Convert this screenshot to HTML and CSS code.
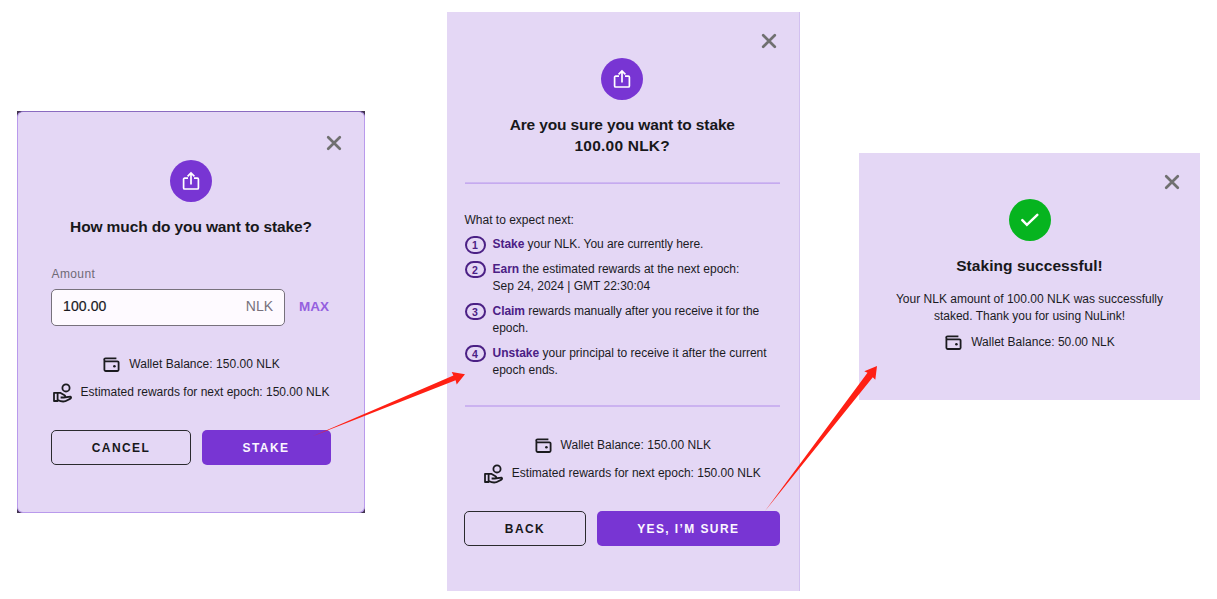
FILE: index.html
```html
<!DOCTYPE html>
<html lang="en">
<head>
<meta charset="utf-8">
<title>Staking flow</title>
<link rel="stylesheet" href="styles.css">
</head>
<body>
<svg class="symbols" aria-hidden="true">
  <symbol id="close" viewBox="0 0 16 16"><path d="M2.200 2.200l11.600 11.600M13.800 2.200L2.200 13.800" fill="none" stroke="#707070" stroke-width="2.700" stroke-linecap="round"/></symbol>
  <symbol id="share" viewBox="0 0 18 20"><path d="M6 7.200H2.600a1 1 0 0 0-1 1v8.800a1 1 0 0 0 1 1h12.800a1 1 0 0 0 1-1V8.200a1 1 0 0 0-1-1H12M9 13.600V2.300M5.600 5.400L9 2l3.400 3.400" fill="none" stroke="#fff" stroke-width="1.700"/></symbol>
  <symbol id="wallet" viewBox="0 0 17 16"><path d="M1.400 3V12.800a1.200 1.200 0 0 0 1.200 1.200h11.800a1.200 1.200 0 0 0 1.200-1.200V5.500a1.200 1.200 0 0 0-1.200-1.200H2.600a1.400 1.400 0 0 1 0-2.900H13.400" fill="none" stroke="#1b1b1f" stroke-width="1.800"/><circle cx="11.400" cy="9.200" r="1.300" fill="#1b1b1f"/></symbol>
  <symbol id="hand" viewBox="0 0 20 20"><g fill="none" stroke="#1b1b1f" stroke-width="1.800" stroke-linejoin="round"><circle cx="14" cy="4.900" r="3.600"/><path d="M2 9.800h3.600v8.200H2zM5.600 9.800h2.600l4.300 2.500c1.200.8.700 2.200-.6 2.200H8.600M11.800 14.500l6.800-.8c.9.800.4 1.600-.6 2.200l-4.700 2.300c-2.400.7-4.700.3-7.700-1.200"/></g></symbol>
</svg>
<main class="board">
  <section class="panel-shell first">
    <div class="panel">
      <svg class="close"><use href="#close"/></svg>
      <div class="badge"><svg class="share"><use href="#share"/></svg></div>
      <h2 class="title t-ask">How much do you want to stake?</h2>
      <div class="label">Amount</div>
      <div class="field-row">
        <div class="field"><span class="value">100.00</span><span class="unit">NLK</span></div>
        <span class="max">MAX</span>
      </div>
      <div class="info">
        <div class="info-row wallet-row"><svg class="wallet"><use href="#wallet"/></svg><span>Wallet Balance: 150.00 NLK</span></div>
        <div class="info-row"><svg class="hand"><use href="#hand"/></svg><span class="est">Estimated rewards for next epoch: 150.00 NLK</span></div>
      </div>
      <div class="actions"><button class="btn outline cancel">CANCEL</button><button class="btn solid">STAKE</button></div>
    </div>
  </section>

  <section class="panel second">
    <svg class="close"><use href="#close"/></svg>
    <div class="badge"><svg class="share"><use href="#share"/></svg></div>
    <h2 class="title t-sure">Are you sure you want to stake<br><span class="sum">100.00 NLK?</span></h2>
    <hr class="rule">
    <div class="steps">
      <p class="lead">What to expect next:</p>
      <div class="step"><span class="num">1</span><p class="s1"><b>Stake</b> your NLK. You are currently here.</p></div>
      <div class="step"><span class="num">2</span><p><b>Earn</b> the estimated rewards at the next epoch:<br>Sep 24, 2024 | GMT 22:30:04</p></div>
      <div class="step"><span class="num">3</span><p class="s3"><b>Claim</b> rewards manually after you receive it for the<br>epoch.</p></div>
      <div class="step"><span class="num">4</span><p><b>Unstake</b> your principal to receive it after the current<br>epoch ends.</p></div>
    </div>
    <hr class="rule">
    <div class="info">
      <div class="info-row wallet-row"><svg class="wallet"><use href="#wallet"/></svg><span>Wallet Balance: 150.00 NLK</span></div>
      <div class="info-row"><svg class="hand"><use href="#hand"/></svg><span class="est">Estimated rewards for next epoch: 150.00 NLK</span></div>
    </div>
    <div class="actions"><button class="btn outline back">BACK</button><button class="btn solid">YES, I’M SURE</button></div>
  </section>

  <section class="panel third">
    <svg class="close"><use href="#close"/></svg>
    <div class="badge success"><svg class="check" viewBox="0 0 20 16"><path d="M2.300 8.200l4.600 4.600L17.300 2.900" fill="none" stroke="#fff" stroke-width="2.500" stroke-linecap="round"/></svg></div>
    <h2 class="title t-done">Staking successful!</h2>
    <p class="message">Your NLK amount of 100.00 NLK was successfully<br>staked. Thank you for using NuLink!</p>
    <div class="info-row wallet-row"><svg class="wallet"><use href="#wallet"/></svg><span>Wallet Balance: 50.00 NLK</span></div>
  </section>

  <svg class="arrows" viewBox="0 0 1217 599" fill="#ff2014">
    <path d="M312 436.500L453.400 375.600L451.700 372L465 374.200L456.700 384.500L455.600 380.200Z"/>
    <path d="M765 511L867.500 372.800L864.300 371.300L877 366L875.300 379.700L872.800 377.200Z"/>
  </svg>
</main>
</body>
</html>
```
FILE: styles.css
```css
* { box-sizing: border-box; }
body { margin: 0; background: #fff; color: #1b1b1f; font: 12px/17.5px "Liberation Sans", Arial, sans-serif; }
h2, p { margin: 0; }
svg { display: block; flex: none; }
.symbols { position: absolute; width: 0; height: 0; }
.board { position: relative; width: 1217px; height: 599px; display: flex; align-items: flex-start; overflow: hidden; }
.arrows { position: absolute; inset: 0; width: 1217px; height: 599px; pointer-events: none; }

.panel { background: #e4d7f5; display: flex; flex-direction: column; align-items: center; position: relative; flex: none; }
.panel-shell { flex: none; background: #42334f; }
.first { margin: 111px 0 0 17px; width: 348px; height: 402px; }
.first .panel { height: 402px; padding: 48px 33.5px 0; border: 1px solid #b99aec; border-top-color: #8a6bc0; border-radius: 6px; }
.second { margin: 12px 0 0 82px; width: 353px; height: 579px; padding: 46px 19px 0 17.5px; border-right: 1px solid #d2c0f0; }
.third { margin: 153px 0 0 59px; width: 341px; height: 247px; padding-top: 46px; }

.close { position: absolute; width: 16px; height: 16px; top: 21px; right: 22px; }
.first .close { top: 23px; }
.third .close { right: 20px; }
.badge { width: 42px; height: 42px; border-radius: 50%; background: #7835d3; display: flex; align-items: center; justify-content: center; flex: none; }
.badge.success { background: #06b41f; }
.share { width: 18px; height: 20px; }
.check { width: 20px; height: 16px; }

.title { margin-top: 14px; font-size: 15.5px; line-height: 21px; text-align: center; white-space: nowrap; color: #18181b; }
.t-ask { letter-spacing: -.12px; }
.t-sure { letter-spacing: -.13px; }
.t-done { letter-spacing: .05px; }
.sum { letter-spacing: .22px; }

.label { align-self: stretch; margin-top: 29px; color: #6f6a75; letter-spacing: .4px; }
.field-row { align-self: stretch; display: flex; align-items: center; margin-top: 5px; margin-left: -.5px; }
.field { width: 234px; height: 37px; border: 1px solid #77717c; border-radius: 5px; background: #fefaff; padding: 0 11px; display: flex; align-items: center; justify-content: space-between; font-size: 14px; }
.value { -webkit-text-stroke: .2px currentColor; letter-spacing: .1px; }
.unit { color: #77717c; }
.max { margin-left: 14px; font-size: 13.5px; font-weight: 700; color: #9560df; }

.info { display: flex; flex-direction: column; align-items: center; gap: 8px; }
.first .info { margin-top: 29px; }
.second .info { margin-top: 29px; }
.info-row { display: flex; align-items: center; justify-content: center; height: 20px; white-space: nowrap; }
.wallet-row { padding-left: 1px; letter-spacing: .03px; }
.wallet { width: 17px; height: 16px; margin-right: 9px; }
.hand { width: 20px; height: 20px; margin-right: 9px; margin-left: -1px; }

.actions { align-self: stretch; display: flex; gap: 10.5px; margin: 27px 0 0 -.5px; }
.btn { height: 35px; border-radius: 5px; font: 700 12px "Liberation Sans", Arial, sans-serif; letter-spacing: 1.4px; padding: 1px 0 0; }
.outline { background: none; border: 1px solid #2a2a2e; color: #18181b; flex: none; }
.solid { background: #7835d3; border: 0; color: #fbf6ff; flex: 1; }
.cancel { width: 140px; }
.back { width: 122px; }

.rule { align-self: stretch; width: 100%; height: 2px; margin: 26px 0 0; border: 0; background: linear-gradient(#d3c0f2, #c1a2ee); flex: none; }
.steps { align-self: stretch; display: flex; flex-direction: column; gap: 7px; margin-top: 27.8px; white-space: nowrap; }
.steps + .rule { margin-top: 25.2px; background: #cbb2f0; }
.step { display: flex; gap: 7px; }
.step b { color: #4b2085; }
.s1 { letter-spacing: -.05px; }
.s3 { letter-spacing: -.04px; }
.num { width: 21px; height: 17.5px; border: 2px solid #4b2085; border-radius: 9px; color: #4b2085; font-size: 10.5px; font-weight: 700; line-height: 14px; text-align: center; flex: none; }
.message { margin: 14.5px 0 7px; text-align: center; white-space: nowrap; }
```
